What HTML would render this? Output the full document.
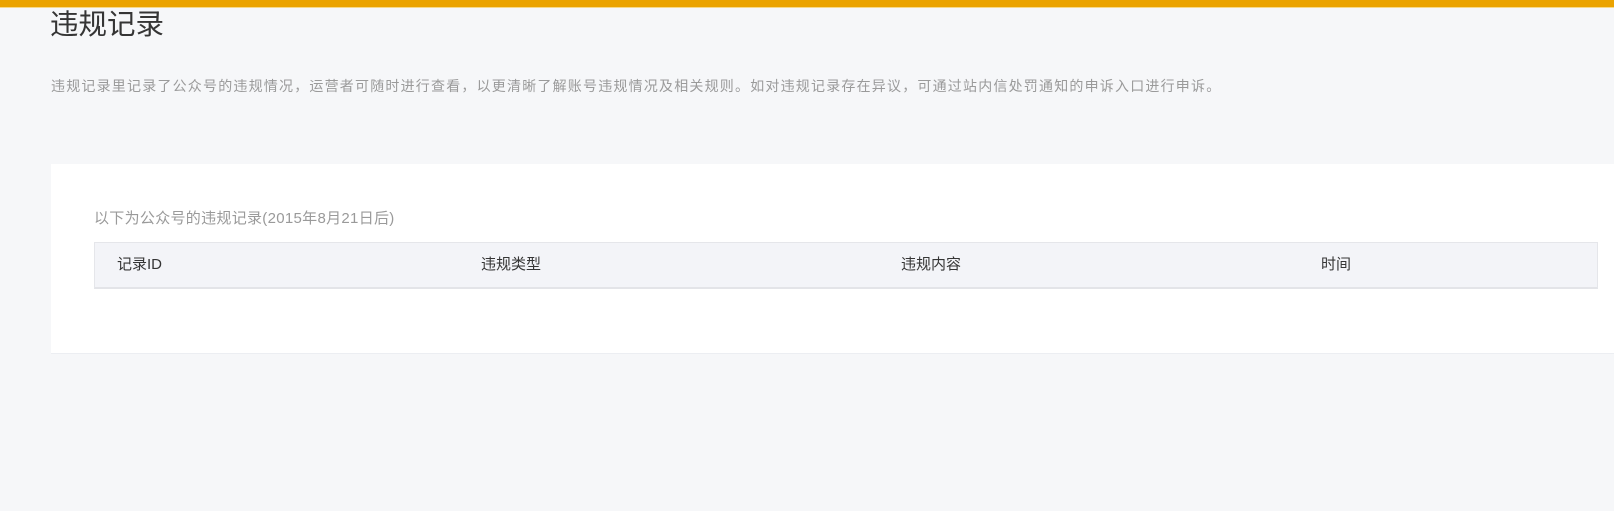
<!DOCTYPE html>
<html><head><meta charset="utf-8"><style>
*{margin:0;padding:0;box-sizing:border-box}
body{width:1614px;height:511px;background:#f6f7f9;font-family:"Liberation Sans","Noto Sans CJK SC",sans-serif;position:relative;overflow:hidden}
.bar{position:absolute;left:0;top:0;width:1614px;height:8px;background:#eba300;border-bottom:1px solid #f7d98a}
h1{position:absolute;left:50px;top:9px;font-size:28.5px;font-weight:normal;color:#353535;line-height:32px}
.desc{position:absolute;left:51px;top:77px;font-size:14px;letter-spacing:1.2px;color:#9a9a9a;line-height:18px;white-space:nowrap}
.card{position:absolute;left:51px;top:164px;width:1570px;height:190px;background:#fff;border-bottom:1px solid #eceef2}
.sub{position:absolute;left:43px;top:45px;font-size:15px;letter-spacing:0.3px;color:#9a9a9a;line-height:20px}
.tbl{position:absolute;left:43px;top:78px;width:1504px;height:47px;background:#f3f4f8;border:1px solid #e5e6ea;border-bottom:2px solid #e3e4e8}
.tbl span{position:absolute;top:12px;font-size:15px;color:#353535;line-height:20px}
</style></head><body>
<div class="bar"></div>
<h1>违规记录</h1>
<div class="desc">违规记录里记录了公众号的违规情况，运营者可随时进行查看，以更清晰了解账号违规情况及相关规则。如对违规记录存在异议，可通过站内信处罚通知的申诉入口进行申诉。</div>
<div class="card">
<div class="sub">以下为公众号的违规记录(2015年8月21日后)</div>
<div class="tbl">
<span style="left:22px">记录ID</span>
<span style="left:386px">违规类型</span>
<span style="left:806px">违规内容</span>
<span style="left:1226px">时间</span>
</div>
</div>
</body></html>
